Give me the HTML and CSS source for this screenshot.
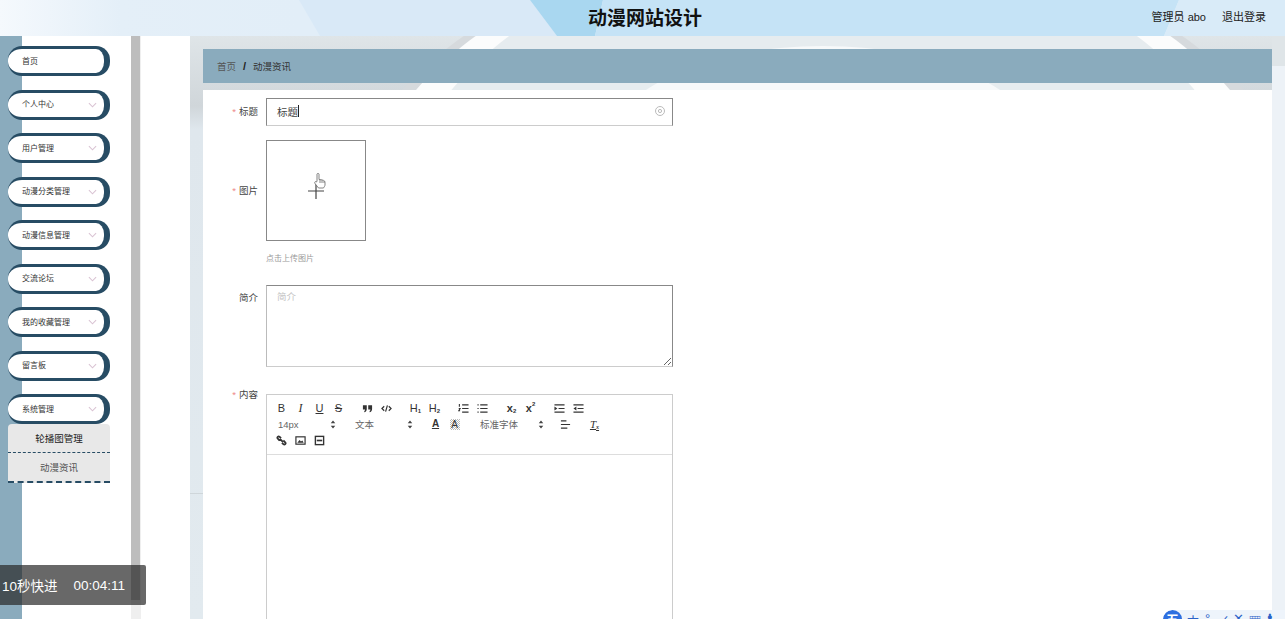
FILE: index.html
```html
<!doctype html>
<html>
    <head>
        <meta charset="utf-8" />
        <title>动漫网站设计</title>
        <link rel="stylesheet" href="styles.css">
    </head>
    <body>
        <header class="topbar">
            <svg class="topbar-bg" viewBox="0 0 1285 36" preserveAspectRatio="none">
                <polygon points="299,0 530,0 557,36 320,36" fill="#d9e9f7" />
                <polygon points="530,0 603,0 595,36 557,36" fill="#a9d7f0" />
                <polygon points="603,0 1179,0 1164,36 595,36" fill="#c5e3f6" />
                <polygon points="1179,0 1285,0 1285,36 1164,36" fill="#d9ebf8" />
            </svg>
            <h1 class="site-title">动漫网站设计</h1>
            <div class="user-links">
                <span>管理员 abo</span>
                <span>退出登录</span>
            </div>
        </header>

        <div class="layout">
            <aside class="sidebar">
                <nav class="menu">
                    <div class="menu-item">首页</div>
                    <div class="menu-item has-sub">个人中心<svg class="chevron" viewBox="0 0 10 6"><path d="M1 1l4 4 4-4" /></svg></div>
                    <div class="menu-item has-sub">用户管理<svg class="chevron" viewBox="0 0 10 6"><path d="M1 1l4 4 4-4" /></svg></div>
                    <div class="menu-item has-sub">动漫分类管理<svg class="chevron" viewBox="0 0 10 6"><path d="M1 1l4 4 4-4" /></svg></div>
                    <div class="menu-item has-sub">动漫信息管理<svg class="chevron" viewBox="0 0 10 6"><path d="M1 1l4 4 4-4" /></svg></div>
                    <div class="menu-item has-sub">交流论坛<svg class="chevron" viewBox="0 0 10 6"><path d="M1 1l4 4 4-4" /></svg></div>
                    <div class="menu-item has-sub">我的收藏管理<svg class="chevron" viewBox="0 0 10 6"><path d="M1 1l4 4 4-4" /></svg></div>
                    <div class="menu-item has-sub">留言板<svg class="chevron" viewBox="0 0 10 6"><path d="M1 1l4 4 4-4" /></svg></div>
                    <div class="menu-group">
                        <div class="menu-item has-sub">系统管理<svg class="chevron" viewBox="0 0 10 6"><path d="M1 1l4 4 4-4" /></svg></div>
                        <div class="submenu">
                            <div class="submenu-item">轮播图管理</div>
                            <div class="submenu-item is-active">动漫资讯</div>
                        </div>
                    </div>
                </nav>
                <div class="scrollbar"><div class="scrollbar-thumb"></div></div>
            </aside>

            <main class="main">
                <svg class="main-bg" viewBox="0 0 1095 583" preserveAspectRatio="none">
                    <defs>
                        <linearGradient id="sideShade" x1="0" y1="0" x2="0" y2="1">
                            <stop offset="0" stop-color="#dfe5e8" />
                            <stop offset="0.12" stop-color="#d0d6da" />
                            <stop offset="0.16" stop-color="#dfe7ed" />
                            <stop offset="1" stop-color="#e2eaef" />
                        </linearGradient>
                    </defs>
                    <rect width="1095" height="583" fill="url(#sideShade)" />
                    <ellipse cx="633" cy="200" rx="482" ry="300" fill="#d6dadd" />
                    <ellipse cx="633" cy="200" rx="466" ry="300" fill="#fbfcfc" />
                    <ellipse cx="633" cy="205" rx="430" ry="300" fill="#e6ecef" />
                    <ellipse cx="633" cy="118" rx="220" ry="108" fill="#f7f9fa" />
                    <rect x="1082" y="0" width="13" height="30" fill="#dfe5e8" />
                    <rect x="1082" y="30" width="13" height="553" fill="#edf2f7" />
                    <rect x="0" y="457" width="13" height="1" fill="#cfd6da" />
                </svg>
                <div class="breadcrumb">
                    <span class="crumb-home">首页</span>
                    <span class="crumb-sep">/</span>
                    <span class="crumb-current">动漫资讯</span>
                </div>

                <form class="form-card">
                    <div class="form-row row-center">
                        <label class="form-label"><i>*</i>标题</label>
                        <div class="text-input">
                            <span>标题</span><span class="caret"></span>
                            <svg class="clear-icon" viewBox="0 0 12 12"><circle cx="6" cy="6" r="4.5" /><circle cx="6" cy="6" r="1.6" /></svg>
                        </div>
                    </div>

                    <div class="form-row row-center row-upload">
                        <label class="form-label"><i>*</i>图片</label>
                        <div class="upload-box">
                            <svg class="upload-plus" viewBox="0 0 16 16"><path d="M8 0v16M0 8h16" /></svg>
                            <svg class="hand-cursor" viewBox="0 0 14 18"><path d="M4 9V2.2C4 1.2 6 1.2 6 2.2V7.500l1 .1 1 .1 1 .2 1.500.5c1 .4 1.500 1 1.500 2V13c0 1-1 2-1.500 3H5.500L2 11.500C1 10 2.500 9 3.500 10z" /><path d="M7 8v3M9 8.200V11M11 9v2" /></svg>
                        </div>
                    </div>
                    <p class="upload-hint">点击上传图片</p>

                    <div class="form-row row-top">
                        <label class="form-label">简介</label>
                        <textarea class="text-area" placeholder="简介"></textarea>
                    </div>

                    <div class="form-row row-top row-editor">
                        <label class="form-label"><i>*</i>内容</label>
                        <div class="editor">
                            <div class="toolbar">
                                <div class="tool-row">
                                    <div class="tool-group">
                                        <span class="tool tool-b">B</span>
                                        <span class="tool tool-i">I</span>
                                        <span class="tool tool-u">U</span>
                                        <span class="tool tool-s">S</span>
                                    </div>
                                    <div class="tool-group">
                                        <span class="tool"><svg viewBox="0 0 12 12"><path class="fill" d="M1 2.500h4.200v4C5.200 8.700 4 9.700 2.500 10.200V8.700c.5-.2.900-.7.900-1.600H1zM6.800 2.500H11v4C11 8.700 9.800 9.700 8.300 10.200V8.700c.5-.2.900-.7.900-1.600H6.800z" /></svg></span>
                                        <span class="tool"><svg viewBox="0 0 12 12"><path stroke-width="1.300" d="M3.500 3.500L1 6l2.500 2.500M8.500 3.500L11 6 8.500 8.500M7 2.500L5 9.500" /></svg></span>
                                    </div>
                                    <div class="tool-group">
                                        <span class="tool tool-h">H<sub>1</sub></span>
                                        <span class="tool tool-h">H<sub>2</sub></span>
                                    </div>
                                    <div class="tool-group">
                                        <span class="tool"><svg viewBox="0 0 12 12"><path stroke-width="1.200" d="M4.500 2H11.500M4.500 6H11.500M4.500 10H11.500M1.500 1v3M.8 6h1.500L.8 8.500h1.500" /></svg></span>
                                        <span class="tool"><svg viewBox="0 0 12 12"><path stroke-width="1.200" d="M3.500 2H11.500M3.500 6H11.500M3.500 10H11.500M.5 2h1.300M.5 6h1.300M.5 10h1.300" /></svg></span>
                                    </div>
                                    <div class="tool-group">
                                        <span class="tool tool-x">x<sub>2</sub></span>
                                        <span class="tool tool-x">x<sup>2</sup></span>
                                    </div>
                                    <div class="tool-group">
                                        <span class="tool"><svg viewBox="0 0 12 12"><path stroke-width="1.300" d="M.5 2h11M5 6h6.500M.5 10h11" /><path class="fill" d="M.5 3.800l3.200 2.200L.5 8.200z" /></svg></span>
                                        <span class="tool"><svg viewBox="0 0 12 12"><path stroke-width="1.300" d="M.5 2h11M5 6h6.500M.5 10h11" /><path class="fill" d="M3.700 3.800L.5 6l3.200 2.200z" /></svg></span>
                                    </div>
                                </div>
                                <div class="tool-row">
                                    <div class="picker picker-size">14px<svg class="picker-arrows" viewBox="0 0 6 10"><path class="fill" d="M3 .5l2.500 3.200H.5zM3 9.500L.5 6.300h5z" /></svg></div>
                                    <div class="picker picker-size">文本<svg class="picker-arrows" viewBox="0 0 6 10"><path class="fill" d="M3 .5l2.500 3.200H.5zM3 9.500L.5 6.300h5z" /></svg></div>
                                    <div class="tool-group">
                                        <span class="tool tool-color">A</span>
                                        <span class="tool"><span class="tool-bg">A</span></span>
                                    </div>
                                    <div class="picker picker-font">标准字体<svg class="picker-arrows" viewBox="0 0 6 10"><path class="fill" d="M3 .5l2.500 3.200H.5zM3 9.500L.5 6.300h5z" /></svg></div>
                                    <div class="tool-group">
                                        <span class="tool"><svg viewBox="0 0 12 12"><path stroke-width="1.300" d="M1 2h6M1 6h10M1 10h7" /></svg></span>
                                    </div>
                                    <div class="tool-group">
                                        <span class="tool tool-clean">T<sub>x</sub></span>
                                    </div>
                                </div>
                                <div class="tool-row">
                                    <span class="tool"><svg viewBox="0 0 12 12"><path d="M5.500 3.500L4 2C2.500.7.700 2.500 2 4l2 2M6.500 8.500L8 10c1.500 1.300 3.300-.5 2-2L8 6M4.500 4.500L7.500 7.500" stroke-width="2" /></svg></span>
                                    <span class="tool"><svg viewBox="0 0 12 12"><rect x="1" y="2" width="10" height="8" stroke-width="1.300" /><path class="fill" d="M2.500 8.500l2.500-3 1.500 1.500 1.500-1 1.500 2.500z" /></svg></span>
                                    <span class="tool"><svg viewBox="0 0 12 12"><rect x="1.500" y="1.500" width="9" height="9" stroke-width="1.500" /><path class="fill" d="M3 5.100h6v1.800H3z" /></svg></span>
                                </div>
                            </div>
                            <div class="editor-body"></div>
                        </div>
                    </div>
                </form>
            </main>
        </div>

        <!-- video player toast -->
        <div class="seek-toast">
            <span>10秒快进</span>
            <span>00:04:11</span>
        </div>

        <!-- input method bar, cut off by the window -->
        <div class="ime-bar">
            <span class="ime-logo">五</span>
            <span class="ime-item">中</span>
            <span class="ime-item">°</span>
            <span class="ime-item">✓</span>
            <span class="ime-item">✕</span>
            <span class="ime-item">▦</span>
            <span class="ime-item">♟</span>
        </div>
    </body>
</html>
```

FILE: styles.css
```css
* {
    box-sizing: border-box;
}

html,
body {
    height: 100%;
}

body {
    margin: 0;
    overflow: hidden;
    background: #fff;
    color: #333;
    font-family: "Liberation Sans", "Noto Sans CJK SC", sans-serif;
}

.topbar {
    position: relative;
    display: flex;
    align-items: center;
    justify-content: center;
    height: 36px;
    background: linear-gradient(90deg, #f5f9fd 0, #e4eff8 120px, #e2eef8 300px);
}

.topbar-bg {
    position: absolute;
    left: 0;
    top: 0;
    width: 100%;
    height: 100%;
}

.site-title {
    position: relative;
    margin: 0 0 3px 5px;
    color: #111;
    font-size: 19px;
    font-weight: bold;
}

.user-links {
    position: absolute;
    right: 19px;
    top: 8px;
    display: flex;
    gap: 16px;
    color: #222;
    font-size: 11px;
}

.layout {
    display: flex;
    height: 583px;
}

/* sidebar */
.sidebar {
    display: flex;
    flex: none;
    width: 141px;
}

.menu {
    display: flex;
    flex-direction: column;
    gap: 13.5px;
    width: 131px;
    padding: 10px 0 0 8px;
    background: linear-gradient(90deg, #8aabbd 22px, #fff 22px);
}

.menu-item {
    display: flex;
    align-items: center;
    justify-content: space-between;
    width: 102px;
    height: 30px;
    padding: 0 7px 2px 14px;
    background: #fff;
    border: solid #274c64;
    border-width: 3px 6px 3px 0;
    border-radius: 14px;
    color: #333;
    font-size: 8px;
}

.chevron {
    width: 9px;
    height: 6px;
    margin-top: 2px;
    fill: none;
    stroke: #d9c3d3;
    stroke-width: 1.2;
}

.submenu {
    width: 102px;
    background: #e8e8e8;
    border-radius: 4px 4px 0 0;
    font-size: 9.5px;
    text-align: center;
}

.submenu-item {
    height: 29px;
    line-height: 29px;
    color: #222;
    border-bottom: 1px dashed #274c64;
}

.submenu-item.is-active {
    height: 30px;
    color: #555;
    border-bottom: 2px dashed #274c64;
}

.scrollbar {
    flex: none;
    width: 10px;
    background: #efefef;
}

.scrollbar-thumb {
    width: 9px;
    height: 564px;
    background: #bdbdbd;
}

/* main area */
.main {
    position: relative;
    flex: 1;
    margin-left: 49px;
    padding: 13px 13px 0;
    overflow: hidden;
}

.main-bg {
    position: absolute;
    left: 0;
    top: 0;
    width: 100%;
    height: 100%;
}

.breadcrumb {
    position: relative;
    display: flex;
    align-items: center;
    gap: 7px;
    height: 34px;
    padding-left: 14px;
    background: #8aabbd;
    font-size: 9.5px;
}

.crumb-home {
    color: #555;
}

.crumb-sep {
    color: #222;
    font-size: 11px;
    font-weight: bold;
}

.crumb-current {
    color: #333;
}

.form-card {
    position: relative;
    height: 600px;
    margin-top: 7px;
    padding-top: 8px;
    background: #fff;
}

.form-row {
    display: flex;
    gap: 8px;
}

.row-center {
    align-items: center;
}

.row-center .form-label {
    padding-bottom: 2px;
}

.row-upload {
    margin-top: 14px;
}

.row-top {
    margin-top: 20px;
}

.row-top .form-label {
    padding-top: 5px;
}

.row-editor {
    margin-top: 27px;
}

.row-editor .form-label {
    padding-top: 0;
    margin-top: -7px;
}

.form-label {
    width: 55px;
    color: #444;
    font-size: 9.5px;
    text-align: right;
}

.form-label i {
    margin-right: 3px;
    color: #e88;
    font-style: normal;
}

.text-input {
    position: relative;
    display: flex;
    align-items: center;
    width: 407px;
    height: 28px;
    padding: 0 0 2px 10px;
    border: 1px solid #888;
    border-bottom-color: #ccc;
    color: #444;
    font-size: 10.5px;
}

.caret {
    width: 1px;
    height: 12px;
    background: #222;
}

.clear-icon {
    position: absolute;
    right: 6px;
    top: 6px;
    width: 12px;
    height: 12px;
    fill: none;
    stroke: #bbb;
}

.upload-box {
    position: relative;
    display: flex;
    align-items: center;
    justify-content: center;
    width: 100px;
    height: 101px;
    border: 1px solid #888;
}

.upload-plus {
    width: 16px;
    height: 16px;
    fill: none;
    stroke: #444;
    stroke-width: 1.2;
}

/* the screen recorder caught the mouse pointer here */
.hand-cursor {
    position: absolute;
    left: 46px;
    top: 31px;
    width: 14px;
    height: 18px;
    fill: #fff;
    stroke: #666;
    stroke-width: 0.8;
}

.upload-hint {
    margin: 12px 0 0 63px;
    color: #999;
    font-size: 8px;
    line-height: 12px;
}

.text-area {
    display: block;
    width: 407px;
    height: 82px;
    padding: 3px 10px;
    border: 1px solid #888;
    border-bottom-color: #ccc;
    border-left-color: #bbb;
    font-family: inherit;
    font-size: 9.5px;
}

.text-area::placeholder {
    color: #c4c4c4;
}

.editor {
    width: 407px;
    border: 1px solid #ccc;
}

.toolbar {
    display: flex;
    flex-direction: column;
    height: 60px;
    padding: 5px 5px 0;
    border-bottom: 1px solid #ddd;
}

.tool-row {
    display: flex;
    align-items: center;
    height: 16px;
}

.tool-group {
    display: flex;
    margin-right: 10px;
}

.tool {
    display: flex;
    align-items: center;
    justify-content: center;
    width: 19px;
    height: 16px;
    color: #333;
    font-size: 11px;
    line-height: 1;
}

.tool svg {
    width: 11px;
    height: 11px;
    fill: none;
    stroke: #333;
    stroke-width: 1;
}

.tool svg .fill {
    fill: #333;
    stroke: none;
}

.tool sub,
.tool sup {
    font-size: 6px;
    font-weight: bold;
    line-height: 0;
}

.tool sub {
    position: relative;
    top: 3px;
    vertical-align: baseline;
}

.tool sup {
    position: relative;
    top: -4px;
    vertical-align: baseline;
}

.tool-i {
    font-family: "Liberation Serif", serif;
    font-style: italic;
    font-size: 12px;
}

.tool-u {
    text-decoration: underline;
}

.tool-s {
    text-decoration: line-through;
}

.tool-x {
    font-weight: bold;
}

.tool-color {
    text-decoration: underline;
    font-size: 10px;
    font-weight: bold;
}

.tool-bg {
    width: 10px;
    height: 11px;
    background: repeating-conic-gradient(#bbb 0 25%, #fff 0 50%) 0 0 / 2px 2px;
    font-size: 10px;
    line-height: 11px;
    text-align: center;
}

.tool-clean {
    font-family: "Liberation Serif", serif;
    font-style: italic;
    text-decoration: underline;
}

.picker {
    position: relative;
    display: flex;
    align-items: center;
    height: 16px;
    padding-left: 6px;
    color: #666;
    font-size: 9.5px;
}

.picker-size {
    width: 66px;
    margin-right: 11px;
}

.picker-font {
    width: 72px;
    margin-right: 10px;
}

.picker-arrows {
    position: absolute;
    right: 2px;
    top: 4px;
    width: 6px;
    height: 9px;
    fill: #444;
}

.editor-body {
    height: 300px;
}

/* overlays */
.seek-toast {
    position: absolute;
    left: 0;
    top: 565px;
    display: flex;
    align-items: center;
    gap: 16px;
    width: 146px;
    height: 40px;
    padding-left: 2px;
    background: rgba(40, 40, 40, 0.7);
    border-radius: 0 2px 2px 0;
    color: #fff;
    font-size: 13.5px;
}

.ime-bar {
    position: absolute;
    left: 1163px;
    top: 610px;
    display: flex;
    align-items: flex-start;
    gap: 4.5px;
    width: 122px;
    height: 9px;
    overflow: hidden;
    background: #eef4fb;
    border-radius: 9px 0 0 0;
    color: #2a62c8;
    font-size: 13px;
}

.ime-logo {
    flex: none;
    width: 19px;
    height: 19px;
    background: #2e6fe0;
    border-radius: 50%;
    color: #fff;
    font-size: 13px;
    font-weight: bold;
    line-height: 19px;
    text-align: center;
}

.ime-item {
    flex: none;
    margin-top: 1px;
    width: 11px;
    text-align: center;
}
```
